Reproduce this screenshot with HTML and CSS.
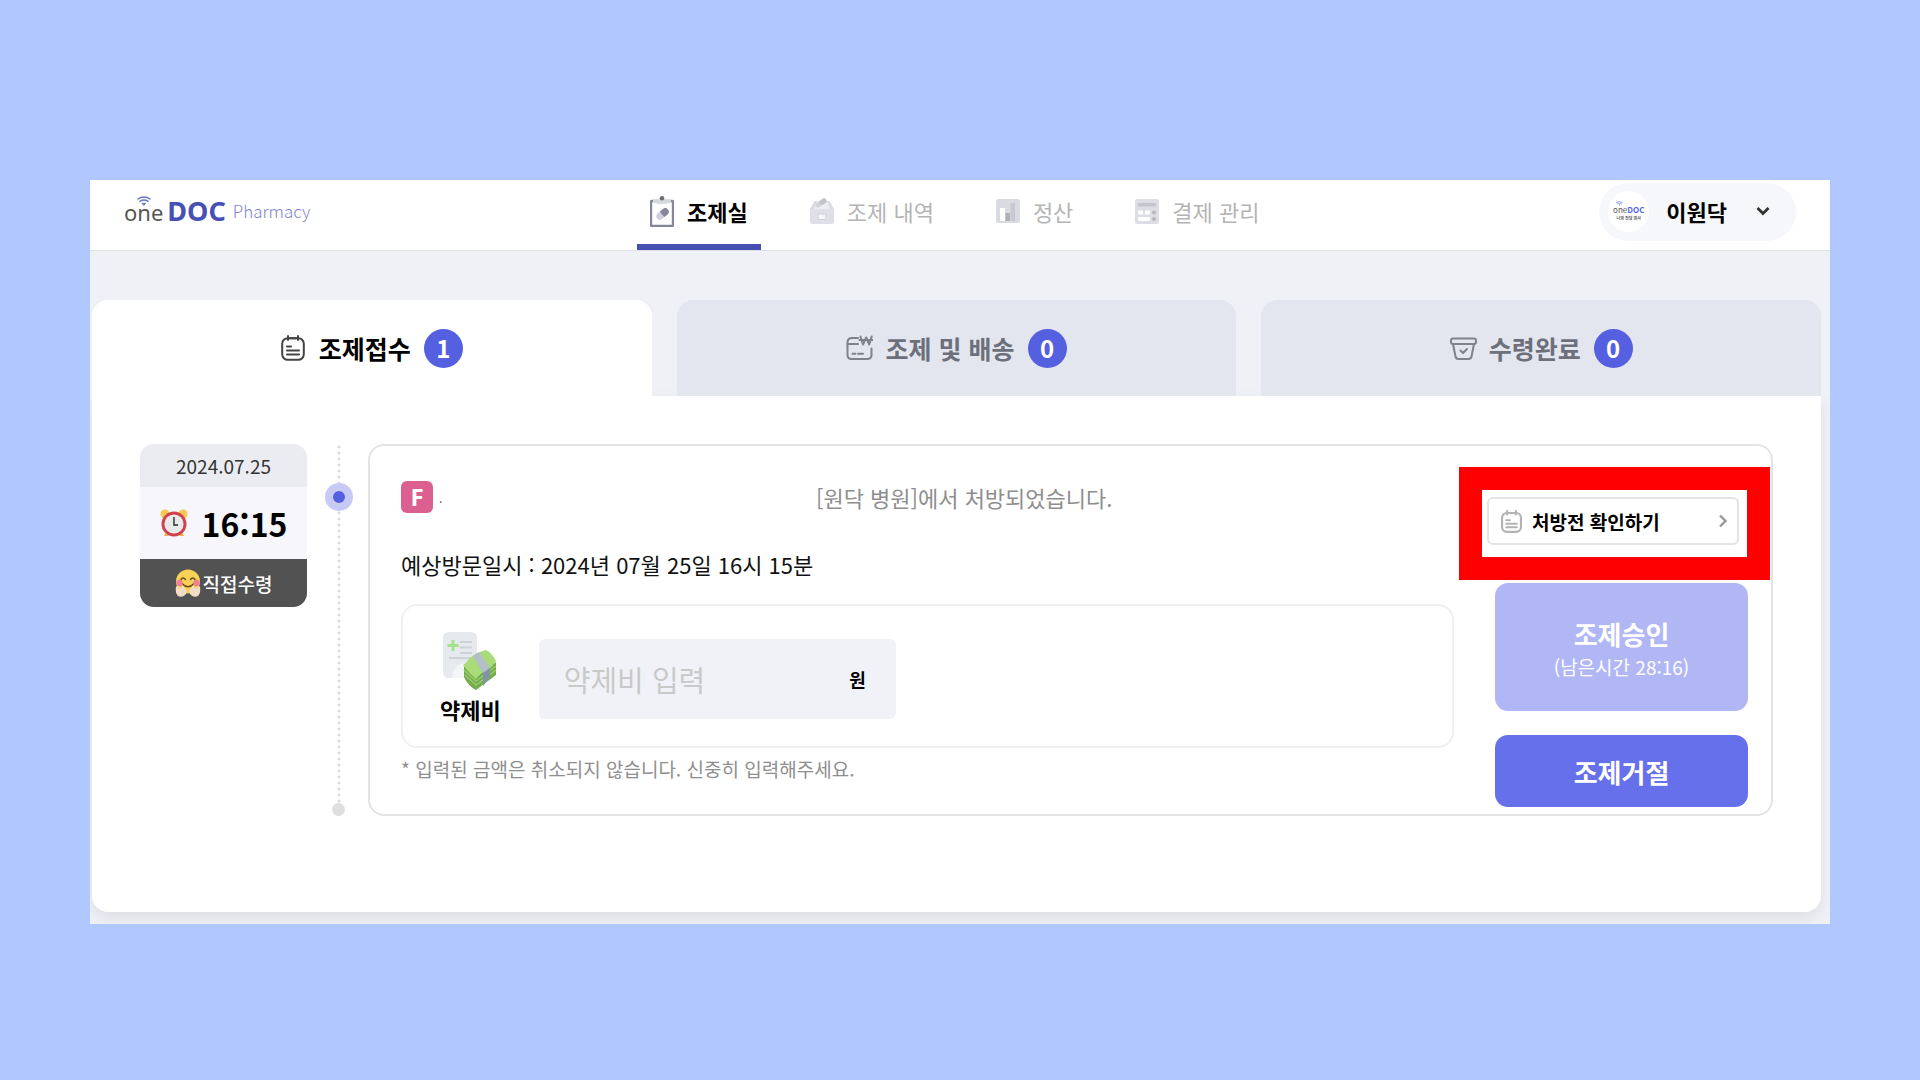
FILE: index.html
```html
<!DOCTYPE html>
<html lang="ko">
<head>
    <meta charset="UTF-8">
    <meta name="viewport" content="width=device-width, initial-scale=1.0">
    <title>oneDOC Pharmacy</title>
    <link rel="stylesheet" href="styles.css">
</head>
<body>
    <div class="app">
        <header class="header">
            <a href="#" class="logo">
                <span class="logo-one">one
                    <svg class="logo-wifi" viewBox="0 0 14 10" fill="none" stroke="#6a70cf" stroke-width="1.5" stroke-linecap="round">
                        <path d="M1 3Q7-1 13 3M3 5.3Q7 2.7 11 5.3"/>
                        <path d="M5.5 7.3h3L7 9.2z" fill="#6a70cf" stroke-width="1"/>
                    </svg>
                </span>
                <span class="logo-doc">DOC</span>
                <span class="logo-sub">Pharmacy</span>
            </a>

            <nav class="nav">
                <a href="#" class="nav-item active">
                    <svg class="nav-icon" viewBox="0 0 24 32">
                        <rect x="1" y="6" width="22" height="25" rx="1" fill="#fff" stroke="#85869c" stroke-width="2.4"/>
                        <path d="M3 4.500h18v3q-9 3-18 0z" fill="#d3dade"/>
                        <circle cx="12" cy="3.2" r="2.300" fill="#6d6e75"/>
                        <g transform="rotate(-40 12.5 19)">
                            <rect x="5.500" y="15.500" width="14" height="7" rx="3.500" fill="#cfd0de"/>
                            <path d="M12 15.500h4a3.500 3.500 0 0 1 0 7h-4z" fill="#85869c"/>
                        </g>
                    </svg>
                    조제실
                </a>
                <a href="#" class="nav-item">
                    <svg class="nav-icon" viewBox="0 0 24 32">
                        <path d="M1 13l4-7h14l4 7v3H1z" fill="#eceef2"/>
                        <path d="M0 14l4.500-8H7L4 14zM24 14l-4.500-8H17l3 8z" fill="#d9dbe1"/>
                        <g transform="rotate(-35 11 8)">
                            <rect x="5" y="5.500" width="12" height="5" rx="2.500" fill="#d2d3d8"/>
                            <rect x="10" y="5.500" width="7" height="5" rx="2.500" fill="#c2c3c9"/>
                        </g>
                        <path d="M0 14h24v13q0 2-2 2H2q-2 0-2-2z" fill="#dfe0e7"/>
                        <rect x="8" y="19" width="8" height="5.500" rx="1" fill="#f6f6f8" stroke="#cdced6"/>
                    </svg>
                    조제 내역
                </a>
                <a href="#" class="nav-item">
                    <svg class="nav-icon" viewBox="0 0 24 32">
                        <rect x="0" y="4" width="24" height="24" rx="2" fill="#dadbe2"/>
                        <rect x="4" y="13" width="5" height="13" fill="#fff"/>
                        <rect x="9.500" y="18" width="4.500" height="8" fill="#b0b1b6"/>
                        <rect x="14.500" y="8" width="4.500" height="18" fill="#c8c9d0"/>
                    </svg>
                    정산
                </a>
                <a href="#" class="nav-item">
                    <svg class="nav-icon" viewBox="0 0 24 32">
                        <rect x="0" y="4" width="24" height="25" rx="2.500" fill="#dddee5"/>
                        <rect x="3" y="8" width="18" height="3.500" fill="#c5c6cc"/>
                        <rect x="3" y="15.500" width="5" height="4" rx="1" fill="#fff"/>
                        <rect x="10" y="15.500" width="5" height="4" rx="1" fill="#fff"/>
                        <rect x="3" y="22" width="12" height="4" rx="1" fill="#fff"/>
                        <circle cx="19" cy="17.500" r="2.100" fill="#b9bac1"/>
                        <circle cx="19" cy="24" r="2.100" fill="#b9bac1"/>
                    </svg>
                    결제 관리
                </a>
            </nav>

            <button type="button" class="profile">
                <span class="avatar">
                    <svg class="avatar-wifi" viewBox="0 0 14 10" fill="none" stroke="#7d8cf0" stroke-width="1.600" stroke-linecap="round">
                        <path d="M1 3Q7-1 13 3M3 5.500Q7 3 11 5.500M7 7.500v1.500"/>
                    </svg>
                    <span class="avatar-name">one<b>DOC</b></span>
                    <span class="avatar-sub">나의 전담 의사</span>
                </span>
                이원닥
                <svg class="profile-arrow" viewBox="0 0 14 10" fill="none" stroke="#333" stroke-width="2.800">
                    <path d="M1.500 2L7 7.500 12.500 2"/>
                </svg>
            </button>
        </header>

        <main class="content">
            <div class="tabs">
                <button type="button" class="tab active">
                    <svg class="tab-icon" viewBox="0 0 24 26" fill="none" stroke="#444" stroke-width="2" stroke-linecap="round">
                        <rect x="1.200" y="3.200" width="21.600" height="21.600" rx="5.500"/>
                        <path d="M7 1v4M17 1v4M9 3.200h6"/>
                        <path d="M6 11.500h4M6 15.500h12M6 19.500h12"/>
                    </svg>
                    조제접수
                    <span class="count">1</span>
                </button>
                <button type="button" class="tab">
                    <svg class="tab-icon wide" viewBox="0 0 27 26" fill="none" stroke="#7f828d" stroke-width="2" stroke-linecap="round" stroke-linejoin="round">
                        <path d="M12 3H6Q1.500 3 1.500 7.500V20q0 4 4 4H21q4.500 0 4.500-4v-6.500"/>
                        <path d="M1.500 9H12"/>
                        <path d="M14.500 1.500l2.500 8 3.200-7 3 7 2.500-8M13.500 5H26.500" stroke-width="2"/>
                        <path d="M6.500 18.800h3M12 18.800h5"/>
                    </svg>
                    조제 및 배송
                    <span class="count">0</span>
                </button>
                <button type="button" class="tab">
                    <svg class="tab-icon wide" viewBox="0 0 27 26" fill="none" stroke="#7f828d" stroke-width="2" stroke-linecap="round" stroke-linejoin="round">
                        <rect x="1" y="3.500" width="25" height="5.500" rx="2"/>
                        <path d="M3 9l2.500 12.500Q6 24 8.500 24h10q2.500 0 3-2.500L24 9"/>
                        <path d="M10.500 15.500l2.500 2.500 4-4"/>
                    </svg>
                    수령완료
                    <span class="count">0</span>
                </button>
            </div>

            <section class="panel">
                <div class="time-card">
                    <div class="time-date">2024.07.25</div>
                    <div class="time-clock">
                        <svg class="clock-icon" viewBox="0 0 28 28">
                            <path d="M6.500 22L4 27h4l3-3zM21.500 22l2.500 5h-4l-3-3z" fill="#eeb04a"/>
                            <circle cx="5" cy="5" r="4.600" fill="#f7c858"/>
                            <circle cx="23" cy="5" r="4.600" fill="#f7c858"/>
                            <circle cx="14" cy="15" r="12.500" fill="#d2414f"/>
                            <circle cx="14" cy="15" r="9.600" fill="#e9eaec"/>
                            <path d="M14 8v8h4" fill="none" stroke="#555" stroke-width="1.800"/>
                        </svg>
                        16:15
                    </div>
                    <div class="time-type">
                        <svg class="hug-icon" viewBox="0 0 26 28">
                            <circle cx="13" cy="12.500" r="12" fill="#f8d256"/>
                            <path d="M6 10.500q2-3 4.500 0M15.500 10.500q2-3 4.500 0" fill="none" stroke="#6a4a1d" stroke-width="1.500" stroke-linecap="round"/>
                            <path d="M7 14.500q6 6.500 12 0" fill="none" stroke="#6a4a1d" stroke-width="1.500" stroke-linecap="round"/>
                            <circle cx="4.500" cy="14" r="3.200" fill="#ef8097"/>
                            <circle cx="21.500" cy="14" r="3.200" fill="#ef8097"/>
                            <path d="M1 18q1-2 2.500 0l1 2 3-3q2-.5 1.500 1.500l2 1.500q1.500 4-1.500 6.500-4 2.500-7 0-2.500-3-1.500-8.500z" fill="#f3dcc6"/>
                            <path d="M25 18q-1-2-2.500 0l-1 2-3-3q-2-.5-1.500 1.500l-2 1.500q-1.500 4 1.500 6.500 4 2.500 7 0 2.500-3 1.500-8.500z" fill="#f3dcc6"/>
                        </svg>
                        직접수령
                    </div>
                </div>

                <div class="timeline">
                    <span class="timeline-dot"></span>
                    <span class="timeline-end"></span>
                </div>

                <article class="order">
                    <div class="order-info">
                        <div class="order-head">
                            <div class="patient">
                                <span class="gender">F</span>
                                <span class="patient-name">.</span>
                            </div>
                            <p class="hospital">[원닥 병원]에서 처방되었습니다.</p>
                        </div>
                        <p class="visit">예상방문일시 : 2024년 07월 25일 16시 15분</p>
                        <div class="fee-box">
                            <label class="fee-label" for="fee">
                                <svg class="fee-icon" viewBox="0 0 54 58">
                                    <path d="M6 0h22q6 0 6 6v40H6q-6 0-6-6V6q0-6 6-6z" fill="#e6eaee"/>
                                    <path d="M9 46q1-13 12-15v15z" fill="#f3f5f7"/>
                                    <path d="M10 8v11M4.500 13.500h11" stroke="#a5e28d" stroke-width="3"/>
                                    <path d="M17 10h12M17 15.500h12M17 21h12M6 26h23" stroke="#cdd2d7" stroke-width="2.200"/>
                                    <path d="M21 34l12 11 20-15v13L33 58q-8-4-12-13z" fill="#73ac4d"/>
                                    <path d="M21 38l12 11 20-15M22 43l11 10 20-15" fill="none" stroke="#98ce6c" stroke-width="1.500"/>
                                    <path d="M20 33q3-1 5-5 8-8 18-10 6 3 10 11-3 5-7 8-8 3-13 10-7-6-13-14z" fill="#a9dc79"/>
                                    <path d="M30 24l6-4 11 16-7 5z" fill="#b5bfc8"/>
                                    <path d="M40 41l7-5v9l-7 9z" fill="#8493a3"/>
                                </svg>
                                약제비
                            </label>
                            <div class="fee-field">
                                <input type="text" id="fee" placeholder="약제비 입력">
                                <span class="fee-unit">원</span>
                            </div>
                        </div>
                        <p class="notice">* 입력된 금액은 취소되지 않습니다. 신중히 입력해주세요.</p>
                    </div>

                    <div class="order-actions">
                        <button type="button" class="btn btn-approve">
                            조제승인
                            <small>(남은시간 28:16)</small>
                        </button>
                        <button type="button" class="btn btn-reject">조제거절</button>
                    </div>

                    <div class="highlight">
                        <button type="button" class="btn-view">
                            <svg class="view-icon" viewBox="0 0 24 26" fill="none" stroke="#b3b3b3" stroke-width="2.400" stroke-linecap="round">
                                <rect x="1.200" y="3.200" width="21.600" height="21.600" rx="5.500"/>
                                <path d="M7 1v4M17 1v4"/>
                                <path d="M6 11.500h4M6 15.500h12M6 19.500h12"/>
                            </svg>
                            처방전 확인하기
                            <svg class="view-arrow" viewBox="0 0 8 14" fill="none" stroke="#999" stroke-width="2.400">
                                <path d="M1 1.500L6.500 7 1 12.500"/>
                            </svg>
                        </button>
                    </div>
                </article>
            </section>
        </main>
    </div>
</body>
</html>
```
FILE: styles.css
```css
:root {
    --primary-color: #5560e0;
    --line-color: #e4e4e4;
    --bg-color: #f0f1f6;
}
* {
    box-sizing: border-box;
}
body {
    margin: 0;
    padding: 180px 90px;
    font-family: "Noto Sans CJK KR", "Noto Sans", sans-serif;
    color: #000;
    background-color: #b0c7ff;
}
p {
    margin: 0;
}
a {
    color: inherit;
    text-decoration: none;
}
button {
    font-family: inherit;
    color: inherit;
    border: none;
    cursor: pointer;
}
svg {
    flex: none;
}
.app {
    background-color: var(--bg-color);
    overflow: hidden;
}

/* header */
.header {
    display: flex;
    justify-content: space-between;
    height: 71px;
    padding: 0 34px;
    background-color: #fff;
    border-bottom: 1px solid #dfe0e4;
}
.logo {
    display: flex;
    align-items: baseline;
    padding-top: 11px;
    line-height: 40px;
}
.logo-one {
    position: relative;
    font-family: "Noto Sans", sans-serif;
    font-size: 22px;
    color: #555;
}
.logo-wifi {
    position: absolute;
    top: 4px;
    left: 13px;
    width: 14px;
    height: 10px;
}
.logo-doc {
    margin-left: 4px;
    font-family: "Noto Sans", sans-serif;
    font-size: 27px;
    font-weight: 700;
    color: #4750b4;
}
.logo-sub {
    align-self: flex-start;
    margin-left: 7px;
    font-size: 17px;
    font-weight: 300;
    color: #8286d2;
}
.nav {
    display: flex;
    gap: 36px;
}
.nav-item {
    display: flex;
    align-items: center;
    gap: 13px;
    padding: 0 13px 8px;
    font-size: 22px;
    color: #b4b4b4;
}
.nav-item.active {
    padding-bottom: 2px;
    border-bottom: 6px solid #4650b2;
    font-weight: 700;
    color: #000;
}
.nav-icon {
    width: 24px;
    height: 32px;
}
.profile {
    display: flex;
    align-items: center;
    align-self: flex-start;
    height: 58px;
    margin-top: 3px;
    padding: 0 26px 2px 9px;
    border-radius: 29px;
    font-size: 22px;
    font-weight: 700;
    background-color: #f6f7fa;
}
.avatar {
    display: flex;
    flex-direction: column;
    align-items: center;
    justify-content: center;
    width: 41px;
    height: 41px;
    margin-right: 17px;
    border-radius: 50%;
    background-color: #fff;
    line-height: 8px;
}
.avatar-wifi {
    width: 7px;
    height: 5px;
    margin-right: 18px;
}
.avatar-name {
    font-size: 8px;
    font-weight: 400;
    color: #555;
}
.avatar-name b {
    color: #5565f0;
}
.avatar-sub {
    font-size: 4px;
    color: #555;
}
.profile-arrow {
    width: 14px;
    height: 10px;
    margin-left: 29px;
}

/* tabs */
.content {
    padding: 49px 9px 12px 2px;
}
.tabs {
    display: grid;
    grid-template-columns: repeat(3, 1fr);
    gap: 25px;
}
.tab {
    display: flex;
    align-items: center;
    justify-content: center;
    height: 96px;
    padding: 0;
    border-radius: 16px 16px 0 0;
    font-size: 25px;
    font-weight: 700;
    color: #6d707b;
    background-color: #e3e6ee;
}
.tab.active {
    color: #000;
    background-color: #fff;
}
.tab-icon {
    width: 24px;
    height: 26px;
    margin-right: 14px;
}
.tab-icon.wide {
    width: 27px;
    margin-right: 12px;
}
.count {
    width: 39px;
    height: 39px;
    margin-left: 13px;
    border-radius: 50%;
    font-size: 24px;
    line-height: 38px;
    color: #fff;
    background-color: var(--primary-color);
}

/* panel */
.panel {
    display: flex;
    padding: 48px 48px 96px;
    border-radius: 0 0 16px 16px;
    background-color: #fff;
    box-shadow: 0 6px 16px rgba(0, 0, 0, 0.08);
}
.time-card {
    flex: none;
    align-self: flex-start;
    width: 167px;
    border-radius: 14px;
    overflow: hidden;
    background-color: #f7f7fb;
}
.time-date {
    font-size: 19px;
    line-height: 43px;
    text-align: center;
    color: #333;
    background-color: #ebecf2;
}
.time-clock {
    display: flex;
    align-items: center;
    justify-content: center;
    gap: 14px;
    height: 72px;
    font-size: 32px;
    font-weight: 700;
}
.clock-icon {
    width: 28px;
    height: 28px;
}
.time-type {
    display: flex;
    align-items: center;
    justify-content: center;
    gap: 2px;
    height: 48px;
    font-size: 19px;
    font-weight: 500;
    color: #fff;
    background-color: #525252;
}
.hug-icon {
    width: 26px;
    height: 28px;
}
.timeline {
    display: flex;
    flex: none;
    flex-direction: column;
    align-items: center;
    justify-content: space-between;
    width: 59px;
    margin-left: 2px;
    background: radial-gradient(circle, #dcdcdc 1px, transparent 2px) center top / 6px 6px repeat-y;
}
.timeline-dot {
    width: 28px;
    height: 28px;
    margin-top: 39px;
    border: 8px solid #c6caf5;
    border-radius: 50%;
    background-color: var(--primary-color);
}
.timeline-end {
    width: 13px;
    height: 13px;
    border-radius: 50%;
    background-color: #dfdfdf;
}

/* order */
.order {
    position: relative;
    display: flex;
    flex: 1;
    gap: 41px;
    border: 2px solid var(--line-color);
    border-radius: 16px;
}
.order-info {
    flex: 1;
    padding: 35px 0 31px 31px;
}
.order-head {
    display: flex;
    align-items: center;
    height: 32px;
}
.patient {
    display: flex;
    align-items: center;
    gap: 6px;
    width: 415px;
}
.gender {
    width: 32px;
    border-radius: 6px;
    font-family: "Noto Sans", sans-serif;
    font-size: 24px;
    font-weight: 700;
    line-height: 32px;
    text-align: center;
    color: #fff;
    background-color: #db6090;
}
.patient-name {
    font-size: 12px;
    color: #555;
}
.hospital {
    font-size: 22px;
    line-height: 32px;
    color: #8e8e8e;
}
.visit {
    margin-top: 34px;
    font-size: 22px;
    line-height: 34px;
    color: #111;
}
.fee-box {
    display: flex;
    align-items: center;
    gap: 38px;
    margin-top: 23px;
    padding: 26px 37px 20px;
    border: 2px solid #f0f0f0;
    border-radius: 16px;
}
.fee-label {
    display: flex;
    flex-direction: column;
    align-items: center;
    gap: 2px;
    font-size: 22px;
    font-weight: 700;
    line-height: 34px;
}
.fee-icon {
    width: 54px;
    height: 58px;
}
.fee-field {
    display: flex;
    align-items: center;
    width: 357px;
    height: 80px;
    padding: 0 30px 0 25px;
    border-radius: 6px;
    background-color: #f1f2f7;
}
.fee-field input {
    flex: 1;
    min-width: 0;
    padding: 0;
    border: none;
    outline: none;
    font-family: inherit;
    font-size: 29px;
    background: none;
}
.fee-field input::placeholder {
    color: #c9c9c9;
}
.fee-unit {
    font-size: 18px;
    font-weight: 700;
}
.notice {
    margin-top: 7px;
    font-size: 19px;
    line-height: 28px;
    color: #8e8e8e;
}
.order-actions {
    display: flex;
    flex: none;
    flex-direction: column;
    justify-content: flex-end;
    gap: 24px;
    padding: 0 23px 7px 0;
}
.btn {
    width: 253px;
    height: 72px;
    border-radius: 13px;
    font-size: 26px;
    font-weight: 700;
    color: #fff;
    background-color: #6570ea;
}
.btn-approve {
    height: 128px;
    padding-top: 6px;
    line-height: 34px;
    background-color: #b1b7f5;
}
.btn-approve small {
    display: block;
    font-size: 19px;
    font-weight: 400;
    line-height: 32px;
}
/* marker over the prescription button */
.highlight {
    position: absolute;
    top: 21px;
    right: 1px;
    padding: 7px 8px 12px 5px;
    border: 23px solid #f00;
    background-color: #fff;
}
.btn-view {
    display: flex;
    align-items: center;
    width: 252px;
    height: 48px;
    padding: 0 10px 0 12px;
    border: 2px solid var(--line-color);
    border-radius: 6px;
    font-size: 19px;
    font-weight: 700;
    background-color: #fff;
}
.view-icon {
    width: 21px;
    height: 23px;
    margin-right: 10px;
}
.view-arrow {
    width: 8px;
    height: 14px;
    margin-left: auto;
}
```
